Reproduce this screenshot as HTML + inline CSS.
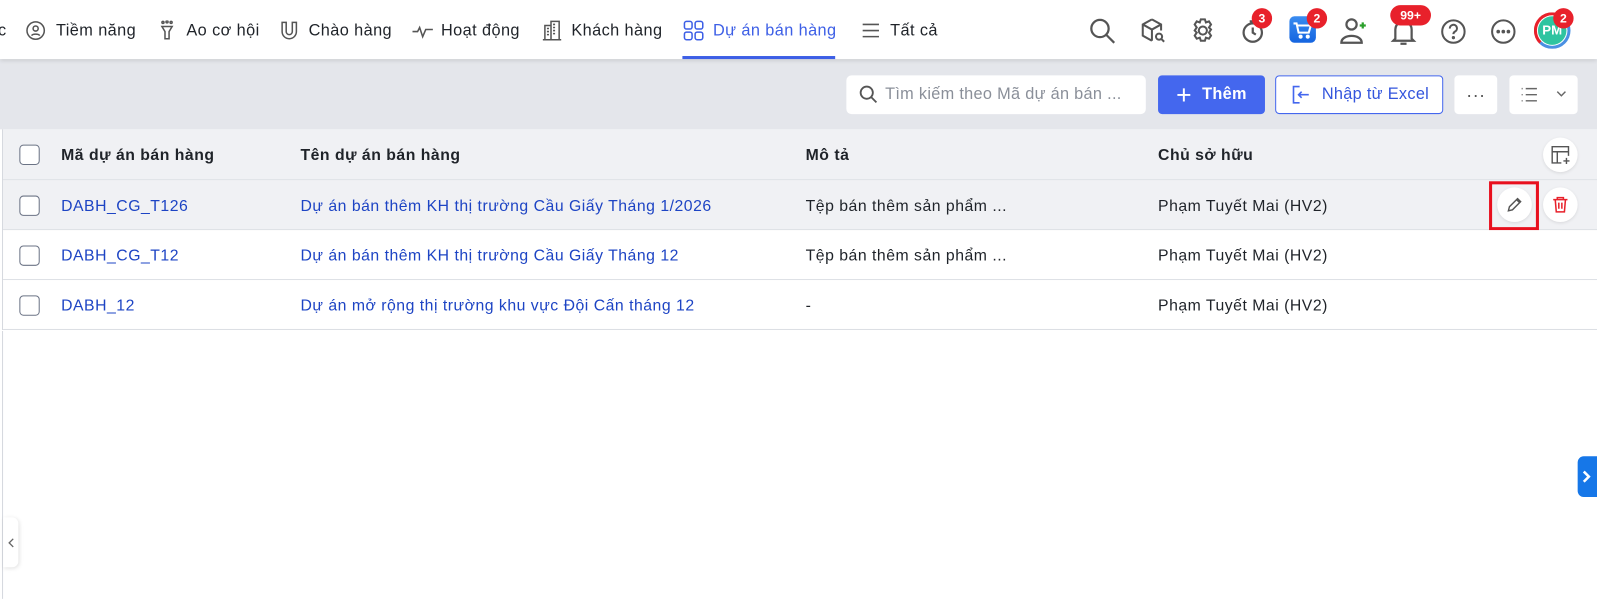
<!DOCTYPE html>
<html><head><meta charset="utf-8"><style>
*{box-sizing:border-box;margin:0;padding:0}
body{width:1597px;height:598px;overflow:hidden;background:#fff;font-family:"Liberation Sans",Arial,sans-serif;color:#1f2329;position:relative}
.wrap{position:absolute;left:0;top:0;width:1568px;height:588px;transform:scale(1.0185);transform-origin:0 0}
.top{position:absolute;left:0;top:0;width:1568px;height:58px;background:#fff;box-shadow:0 2px 4px rgba(0,0,0,.12);z-index:2}
.ni{position:absolute;top:20px}
.nt{position:absolute;top:2px;line-height:58px;font-size:16px;letter-spacing:.4px;color:#1f2329;white-space:nowrap}
.ic{stroke:#555;fill:none;stroke-width:1.5}
.gray{position:absolute;left:0;top:58px;width:1568px;height:69px;background:#e4e6eb}
.btn{position:absolute;top:74px;height:38px;border-radius:4px;display:flex;align-items:center;justify-content:center;font-size:16px;letter-spacing:.3px}
.tbl{position:absolute;left:2px;top:127px;width:1566px;border-left:1px solid #d5d8de}
.row{position:relative;height:49px;border-bottom:1px solid #dcdfe4;font-size:15.5px;letter-spacing:.5px;background:#fff}
.row div{position:absolute;top:1px;line-height:49px;white-space:nowrap}
.hd{background:#f0f1f4;height:50px;font-weight:bold}
.hd div{line-height:50px}
.cb{position:absolute;left:16px;top:15px;width:20px;height:20px;border:1.5px solid #6b7385;border-radius:4px;background:#fff}
a{color:#1d44c4;text-decoration:none}
.badge{position:absolute;background:#e8212b;color:#fff;font-size:12px;font-weight:bold;border-radius:10px;height:18px;min-width:18px;text-align:center;line-height:18px;padding:0 4px}
.circ{position:absolute;width:34px;height:34px;border-radius:50%;background:#fff;box-shadow:0 1px 3px rgba(0,0,0,.1);display:flex;align-items:center;justify-content:center}
</style></head><body><div class="wrap">
<div class="top">
 <div class="nt" style="left:-2px">c</div>
 <svg class="ni ic" style="left:25px" width="20" height="20" viewBox="0 0 20 20"><circle cx="10" cy="10" r="8.5"/><circle cx="10" cy="8" r="2.5"/><path d="M6 15c1-2 7-2 8 0"/></svg><div class="nt" style="left:55px">Tiềm năng</div>
 <svg class="ni ic" style="left:155px" width="18" height="20" viewBox="0 0 18 20"><path d="M4 6h10l-3 5v7h-4v-7z"/><circle cx="5" cy="2" r="1"/><circle cx="9" cy="1.5" r="1"/><circle cx="13" cy="2" r="1"/></svg><div class="nt" style="left:183px">Ao cơ hội</div>
 <svg class="ni ic" style="left:274px" width="20" height="20" viewBox="0 0 20 20"><path d="M3 2v9a7 7 0 0 0 14 0V2h-4v9a3 3 0 0 1-6 0V2z"/></svg><div class="nt" style="left:303px">Chào hàng</div>
 <svg class="ni ic" style="left:404px" width="22" height="20" viewBox="0 0 22 20"><path d="M1 11h5l2-4 3 9 3-7h7"/></svg><div class="nt" style="left:433px">Hoạt động</div>
 <svg class="ni ic" style="left:531px;top:19px" width="22" height="22" viewBox="0 0 22 22"><path d="M2 20h18M4 20V6h6v14M10 20V2h8v18M6 9h2M6 12h2M6 15h2M12 5h2M12 8h2M12 11h2M12 14h2"/></svg><div class="nt" style="left:561px">Khách hàng</div>
 <svg class="ni" style="left:670px;top:19px" width="22" height="22" viewBox="0 0 22 22" fill="none" stroke="#3d5fe6" stroke-width="1.5"><rect x="2" y="2" width="7.5" height="7.5" rx="2"/><rect x="12.5" y="2" width="7.5" height="7.5" rx="2"/><rect x="2" y="12.5" width="7.5" height="7.5" rx="2"/><rect x="12.5" y="12.5" width="7.5" height="7.5" rx="2"/></svg><div class="nt" style="left:700px;color:#3d5fe6">Dự án bán hàng</div>
 <svg class="ni ic" style="left:845px" width="20" height="20" viewBox="0 0 20 20"><path d="M2 4h16M2 10h16M2 16h16"/></svg><div class="nt" style="left:874px">Tất cả</div>
 <div style="position:absolute;left:670px;top:55px;width:150px;height:3px;background:#3d5fe6"></div>
 <svg style="position:absolute;left:1069px;top:17px" width="28" height="28" viewBox="0 0 28 28" fill="none" stroke="#555" stroke-width="2.2"><circle cx="11" cy="11" r="8.5"/><path d="M17 17l8 8"/></svg>
 <svg style="position:absolute;left:1118px;top:16px" width="28" height="28" viewBox="0 0 28 28" fill="none" stroke="#555" stroke-width="2"><path d="M13 3l9 5v6M13 3L4 8v11l9 5M4 8l9 5 9-5M13 13v11"/><circle cx="20" cy="20" r="3"/><path d="M22 22l3 3"/></svg>
 <svg style="position:absolute;left:1167px;top:16px" width="28" height="28" viewBox="0 0 28 28" fill="none" stroke="#555" stroke-width="2"><circle cx="14" cy="14" r="4"/><path d="M12 3h4l1 3 3-1 2 3-2 3 2 2-2 3 2 3-2 3-3-1-1 3h-4l-1-3-3 1-2-3 2-3-2-2 2-3-2-3 2-3 3 1z"/></svg>
 <svg style="position:absolute;left:1218px;top:18px" width="26" height="26" viewBox="0 0 26 26" fill="none" stroke="#555" stroke-width="2.2"><circle cx="12" cy="14" r="9"/><path d="M12 9v5l3 2M9 3h6"/></svg>
 <div class="badge" style="left:1229px;top:8px;border-radius:50%;width:20px;height:20px;line-height:20px">3</div>
 <div style="position:absolute;left:1266px;top:16px;width:26px;height:26px;border-radius:5px;background:linear-gradient(#3a8cf0,#1464e0)"><svg width="26" height="26" viewBox="0 0 26 26" fill="none" stroke="#fff" stroke-width="2"><path d="M4 7h3l2 9h10l2-7H8"/><circle cx="11" cy="20" r="1"/><circle cx="18" cy="20" r="1"/></svg></div>
 <div class="badge" style="left:1283px;top:8px;border-radius:50%;width:20px;height:20px;line-height:20px">2</div>
 <svg style="position:absolute;left:1314px;top:16px" width="30" height="28" viewBox="0 0 30 28" fill="none" stroke="#555" stroke-width="2.2"><circle cx="13" cy="8" r="5"/><path d="M3 26c0-9 20-9 20 0z"/><path d="M24 6v6M21 9h6" stroke="#2ca02c"/></svg>
 <svg style="position:absolute;left:1365px;top:16px" width="26" height="30" viewBox="0 0 26 30" fill="none" stroke="#555" stroke-width="2.2"><path d="M5 22V13a8 8 0 0 1 16 0v9l2 2H3zM10 27h6"/></svg>
 <div class="badge" style="left:1365px;top:5px;width:40px;height:20px;line-height:20px">99+</div>
 <svg style="position:absolute;left:1413px;top:17px" width="28" height="28" viewBox="0 0 28 28" fill="none" stroke="#555" stroke-width="2"><circle cx="14" cy="14" r="11"/><path d="M10.5 11a3.5 3.5 0 1 1 5 3c-1 .6-1.5 1.2-1.5 2.5"/><circle cx="14" cy="20" r=".6" fill="#555"/></svg>
 <svg style="position:absolute;left:1462px;top:17px" width="28" height="28" viewBox="0 0 28 28" fill="none" stroke="#555" stroke-width="2"><circle cx="14" cy="14" r="11"/><circle cx="9" cy="14" r=".8" fill="#555"/><circle cx="14" cy="14" r=".8" fill="#555"/><circle cx="19" cy="14" r=".8" fill="#555"/></svg>
 <div style="position:absolute;left:1506px;top:12px;width:36px;height:36px;border-radius:50%;border:3px solid #4a90e2;border-left-color:#e8212b;border-top-color:#e8212b"><div style="margin:1px;width:28px;height:28px;border-radius:50%;background:#2ec4a0;color:#fff;font-weight:bold;font-size:13px;line-height:28px;text-align:center">PM</div></div>
 <div class="badge" style="left:1525px;top:8px;border-radius:50%;width:20px;height:20px;line-height:20px">2</div>
</div>
<div class="gray"></div>
<div class="btn" style="left:831px;width:294px;background:#fff;justify-content:flex-start;padding-left:12px;color:#8a8f99;font-size:16px;border-radius:5px"><svg width="20" height="20" viewBox="0 0 20 20" fill="none" stroke="#555" stroke-width="1.8" style="margin-right:6px"><circle cx="8" cy="8" r="6"/><path d="M12.5 12.5l5 5"/></svg>Tìm kiếm theo Mã dự án bán ...</div>
<div class="btn" style="left:1137px;width:105px;background:#4467ee;color:#fff;font-weight:bold"><span style="font-size:26px;font-weight:normal;margin-right:10px;line-height:1">+</span>Thêm</div>
<div class="btn" style="left:1252px;width:165px;background:#fff;border:1px solid #4467ee;color:#3355dd"><svg width="22" height="22" viewBox="0 0 22 22" fill="none" stroke="#4467ee" stroke-width="1.6" style="margin-right:10px"><path d="M8 3H4v16h4M4 3h6M4 19h6M19 11H9M12 8l-3 3 3 3"/></svg>Nhập từ Excel</div>
<div class="btn" style="left:1428px;width:42px;background:#fff;font-size:18px;color:#555">···</div>
<div class="btn" style="left:1482px;width:67px;background:#fff"><svg width="48" height="20" viewBox="0 0 48 20" fill="none" stroke="#666" stroke-width="1.4"><path d="M2 4h1M6 4h11M2 10h1M6 10h11M2 16h1M6 16h11M37 7l4 4 4-4"/></svg></div>
<div class="tbl">
 <div class="row hd"><span class="cb"></span><div style="left:57px">Mã dự án bán hàng</div><div style="left:292px">Tên dự án bán hàng</div><div style="left:788px">Mô tả</div><div style="left:1134px">Chủ sở hữu</div>
  <div class="circ" style="left:1512px;top:8px"><svg width="22" height="22" viewBox="0 0 22 22" fill="none" stroke="#555" stroke-width="1.4"><path d="M12 19H3V3h16v9M3 8h16M8 8v11M14 17h6M17 14v6"/></svg></div></div>
 <div class="row" style="background:#f0f1f4"><span class="cb"></span><div style="left:57px"><a>DABH_CG_T126</a></div><div style="left:292px"><a>Dự án bán thêm KH thị trường Cầu Giấy Tháng 1/2026</a></div><div style="left:788px">Tệp bán thêm sản phẩm ...</div><div style="left:1134px">Phạm Tuyết Mai (HV2)</div>
  <div style="position:absolute;left:1459px;top:1px;width:49px;height:48px;border:3px solid #e8101e"></div>
  <div class="circ" style="left:1467px;top:7px"><svg width="18" height="18" viewBox="0 0 18 18" fill="none" stroke="#555" stroke-width="1.4"><path d="M3 15l1-4 8-8 3 3-8 8zM11 4l3 3"/></svg></div>
  <div class="circ" style="left:1512px;top:7px"><svg width="18" height="18" viewBox="0 0 18 18" fill="none" stroke="#e8212b" stroke-width="1.5"><path d="M2 4h14M6 4V2h6v2M4 4l1 12h8l1-12M7.5 7v6M10.5 7v6"/></svg></div></div>
 <div class="row"><span class="cb"></span><div style="left:57px"><a>DABH_CG_T12</a></div><div style="left:292px"><a>Dự án bán thêm KH thị trường Cầu Giấy Tháng 12</a></div><div style="left:788px">Tệp bán thêm sản phẩm ...</div><div style="left:1134px">Phạm Tuyết Mai (HV2)</div></div>
 <div class="row"><span class="cb"></span><div style="left:57px"><a>DABH_12</a></div><div style="left:292px"><a>Dự án mở rộng thị trường khu vực Đội Cấn tháng 12</a></div><div style="left:788px">-</div><div style="left:1134px">Phạm Tuyết Mai (HV2)</div></div>
</div>
<div style="position:absolute;left:2px;top:325px;width:1px;height:263px;background:#d5d8de"></div>
<div style="position:absolute;left:3px;top:508px;width:15px;height:49px;background:#fff;border-radius:0 6px 6px 0;box-shadow:1px 1px 4px rgba(0,0,0,.12)"><svg width="15" height="49" viewBox="0 0 15 49" fill="none" stroke="#666" stroke-width="1.3"><path d="M10 21l-4 4 4 4"/></svg></div>
<div style="position:absolute;left:1549px;top:448px;width:19px;height:40px;background:#1677e8;border-radius:6px 0 0 6px"><svg width="19" height="40" viewBox="0 0 19 40" fill="none" stroke="#fff" stroke-width="2.5"><path d="M6 15l5 5-5 5"/></svg></div>
</div></body></html>
